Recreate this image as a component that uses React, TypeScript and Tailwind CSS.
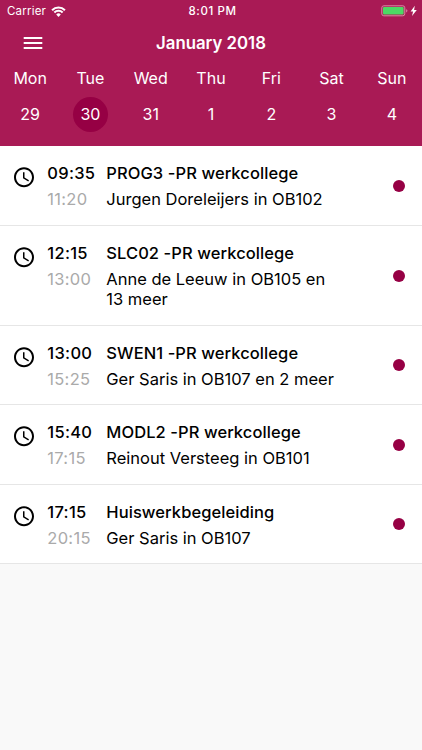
const days = [['Mon','29'],['Tue','30'],['Wed','31'],['Thu','1'],['Fri','2'],['Sat','3'],['Sun','4']];
const events = [
  { start: '09:35', end: '11:20', title: 'PROG3 -PR werkcollege', lines: ['Jurgen Doreleijers in OB102'], h: 'h-[80px]' },
  { start: '12:15', end: '13:00', title: 'SLC02 -PR werkcollege', lines: ['Anne de Leeuw in OB105 en', '13 meer'], h: 'h-[100px]' },
  { start: '13:00', end: '15:25', title: 'SWEN1 -PR werkcollege', lines: ['Ger Saris in OB107 en 2 meer'], h: 'h-[79px]' },
  { start: '15:40', end: '17:15', title: 'MODL2 -PR werkcollege', lines: ['Reinout Versteeg in OB101'], h: 'h-[80px]' },
  { start: '17:15', end: '20:15', title: 'Huiswerkbegeleiding', lines: ['Ger Saris in OB107'], h: 'h-[79px]' },
];

function Clock() {
  return (
    <svg className="mt-[19px] ml-[11.7px] h-6 w-6 shrink-0" viewBox="0 -0.3 24 24" fill="#000">
      <path d="M11.99 2C6.47 2 2 6.48 2 12s4.47 10 9.99 10C17.52 22 22 17.52 22 12S17.52 2 11.99 2zM12 20c-4.42 0-8-3.58-8-8s3.58-8 8-8 8 3.58 8 8-3.58 8-8 8zm.5-13H11v6l5.25 3.15.75-1.23-4.5-2.67z" />
    </svg>
  );
}

export default function App() {
  return (
    <div className="h-[750px] w-[422px] overflow-hidden bg-[#f9f9f9] font-['Inter',sans-serif] text-black">
      <header className="h-[146px] bg-[#a91a55] text-white">
        <div className="grid h-[22px] grid-cols-3 items-center text-[11.5px] leading-[22px]">
          <div className="flex items-center gap-[5px] pl-[7px]">
            <span className="tracking-[0.2px]">Carrier</span>
            <svg width="15" height="11" viewBox="0 0 14 10.6" fill="none" stroke="#fff" strokeWidth="2">
              <path d="M.8 4a8.8 8.8 0 0 1 12.4 0M3 6.3a5.7 5.7 0 0 1 8 0" />
              <path d="M7 10.5 4.8 8.2a3.1 3.1 0 0 1 4.4 0z" fill="#fff" stroke="none" />
            </svg>
          </div>
          <div className="pl-[3px] text-center font-medium tracking-[0.6px]">8:01 PM</div>
          <div className="flex items-center justify-end pr-[5px]">
            <svg width="36" height="12" viewBox="0 0 36 12">
              <rect x=".8" y=".8" width="23" height="10" rx="2" fill="none" stroke="#d98aa5" />
              <rect x="2" y="2" width="20.6" height="7.6" rx="1" fill="#4cd964" />
              <path d="M25.2 4.2v3.2q1.2-.4 1.2-1.6t-1.2-1.6z" fill="#d98aa5" />
              <path d="M33.8.8 29.6 6.4h2.5L31 11l4.8-6h-2.7z" fill="#fff" />
            </svg>
          </div>
        </div>
        <div className="grid h-[41px] grid-cols-[60px_1fr_60px] items-center">
          <svg className="ml-[21px]" width="24" height="24" viewBox="0 0 24 24" fill="#fff"><path d="M2.7 18.1h18.6v-2.1H2.7zm0-5h18.6v-2.1H2.7zm0-7.1v2.1h18.6V6z" /></svg>
          <h1 className="pt-[2px] text-center text-[16.8px] font-semibold">January 2018</h1>
        </div>
        <div className="grid grid-cols-7 text-center text-[16px]">
          {days.map(([day, date]) => (
            <div key={day} className="flex flex-col items-center">
              <span className="h-[33.5px] leading-[30px]">{day}</span>
              <span className={`h-[35.5px] w-[35.5px] rounded-full leading-[34px] ${date === '30' ? 'bg-[#960044]' : ''}`}>{date}</span>
            </div>
          ))}
        </div>
      </header>
      <main>
        {events.map((e) => (
          <article key={e.title} className={`flex border-b border-[#e6e6e6] bg-white text-[16.5px] leading-5 ${e.h}`}>
            <Clock />
            <div className="ml-[11.6px] w-[59px] shrink-0 pt-[17px] tracking-[0.3px]">
              <p className="font-medium">{e.start}</p>
              <p className="mt-[6px] text-[#aaa]">{e.end}</p>
            </div>
            <div className="grow pt-[17px]">
              <h2 className="font-medium tracking-[0.08px]">{e.title}</h2>
              <div className="mt-[6px]">{e.lines.map((line) => <p key={line}>{line}</p>)}</div>
            </div>
            <span className="mr-[17px] h-3 w-3 self-center rounded-full bg-[#960044]" />
          </article>
        ))}
      </main>
    </div>
  );
}
